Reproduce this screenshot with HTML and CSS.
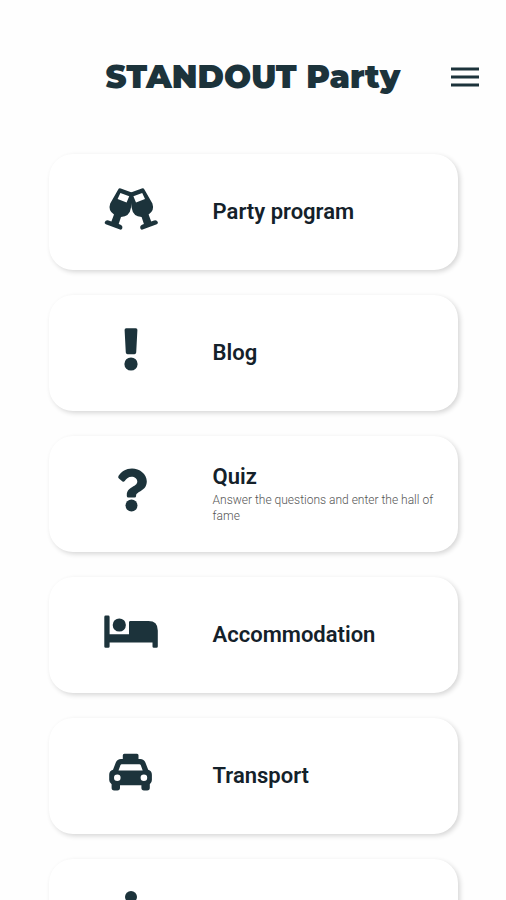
FILE: index.html
```html
<!DOCTYPE html>
<html lang="en">
<head>
<meta charset="utf-8">
<meta name="viewport" content="width=device-width, initial-scale=1">
<title>STANDOUT Party</title>
<link rel="stylesheet" href="styles.css">
</head>
<body>
<header class="header">
  <h1 class="title">STANDOUT Party</h1>
  <button class="menu" type="button" aria-label="Menu">
    <svg class="menu-icon" viewBox="0 0 28 20" aria-hidden="true"><path d="M0 2h28M0 10h28M0 18h28"/></svg>
  </button>
</header>
<main class="cards">
  <a class="card" href="#program">
    <svg class="icon" viewBox="0 0 60 50" aria-hidden="true">
      <g id="glass"><path fill-rule="evenodd" d="M17.2 2.4Q18 .8 19.8 1.4L30.8 5.6 31.4 9.6 30 20.5Q28.6 29.8 20 30L17.7 37 19.6 37.8Q22 38.9 21.2 41.5Q20.7 43.1 19 42.5L4.8 37.3Q3.2 36.6 3.8 35.1Q4.9 32.5 7.6 33.5L10.4 34.5 13 27.4Q6.8 23.4 9.2 16.4ZM19.4 6 16.6 12 25.6 15.4 28.2 9.2Z"/></g>
      <use href="#glass" transform="matrix(-1 0 0 1 60.6 0)"/>
    </svg>
    <span class="text"><span class="name">Party program</span></span>
  </a>
  <a class="card" href="#blog">
    <svg class="icon" viewBox="0 0 60 50" aria-hidden="true"><path d="M25.2.3H34.8Q36.5.3 36.4 2L35.2 24.6Q35 26.2 33.4 26.2H26.6Q25 26.2 24.8 24.6L23.6 2Q23.5.3 25.2.3Z"/><circle cx="30" cy="36" r="6.6"/></svg>
    <span class="text"><span class="name">Blog</span></span>
  </a>
  <a class="card" href="#quiz">
    <svg class="icon" viewBox="0 0 60 50" aria-hidden="true"><path d="M17.6 6.8C20.8 2.2 24.8-.6 31-.6C38.5-.6 45.8 4.8 45.8 12.3C45.8 22.4 35.1 22.3 35.1 26.6V27Q35.1 28.6 33.5 28.6H27.4Q25.8 28.6 25.8 27V26C25.8 17.4 36.3 18.2 36.3 12.5C36.3 9.5 33.4 7.8 30.7 7.8C27.3 7.8 25.8 9.4 23.7 12.1Q22.7 13.3 21.5 12.4L17.9 9.6Q16.5 8.4 17.6 6.8Z"/><circle cx="30.5" cy="36.6" r="6"/></svg>
    <span class="text"><span class="name">Quiz</span><span class="note">Answer the questions and enter the hall of fame</span></span>
  </a>
  <a class="card" href="#accommodation">
    <svg class="icon" viewBox="0 0 60 50" aria-hidden="true"><path d="M4.7 5.6H7.2Q8.6 5.6 8.6 7V24.3H28V12.4Q28 11 29.4 11H47.4Q56.8 11 56.8 20.4V36.4Q56.8 37.8 55.4 37.8H52.9Q51.5 37.8 51.5 36.4V32.5H8.6V36.4Q8.6 37.8 7.2 37.8H4.7Q3.3 37.8 3.3 36.4V7Q3.3 5.6 4.7 5.6Z"/><circle cx="18.3" cy="15" r="6.6"/></svg>
    <span class="text"><span class="name">Accommodation</span></span>
  </a>
  <a class="card" href="#transport">
    <svg class="icon" viewBox="0 0 60 50" aria-hidden="true"><path fill-rule="evenodd" d="M23.3 2.8H36Q37.5 2.8 37.5 4.3V8H39.2Q43 8 44.4 11.6L47.2 18.8Q50.9 20 50.9 23.7V29Q50.9 31.8 48.8 33.2V36.8Q48.8 39.4 46.2 39.4H43Q40.4 39.4 40.4 36.8V34.3H19V36.8Q19 39.4 16.4 39.4H13.2Q10.6 39.4 10.6 36.8V33.2Q8.2 31.8 8.2 29V23.7Q8.2 20 12 18.8L14.8 11.6Q16.2 8 20 8H21.8V4.3Q21.8 2.8 23.3 2.8ZM20.8 13.2Q19.8 13.2 19.4 14.2L17.5 19.4H41.7L39.8 14.2Q39.4 13.2 38.4 13.2ZM16.3 23.5A3.3 3.3 0 1 0 16.3 30.1A3.3 3.3 0 1 0 16.3 23.5ZM42.9 23.5A3.3 3.3 0 1 0 42.9 30.1A3.3 3.3 0 1 0 42.9 23.5Z"/></svg>
    <span class="text"><span class="name">Transport</span></span>
  </a>
  <a class="card" href="#information" aria-label="Information">
    <svg class="icon" viewBox="0 0 60 50" aria-hidden="true"><circle cx="30" cy="5" r="6"/><path d="M23 16H35V36H38V42H22V36H25V22H23Z"/></svg>
  </a>
</main>
</body>
</html>
```
FILE: styles.css
```css
* {
  box-sizing: border-box;
}

body {
  margin: 0;
  background: #fefefe;
  color: #1c333b;
  font-family: Roboto, "Liberation Sans", sans-serif;
}

.header {
  display: grid;
  grid-template-columns: 1fr auto 1fr;
  align-items: center;
  padding: 52px 27px;
}

.title {
  grid-column: 2;
  margin: 0;
  font-family: Montserrat, Inter, sans-serif;
  font-size: 32px;
  font-weight: 900;
  line-height: 50px;
  white-space: nowrap;
}

.menu {
  justify-self: end;
  display: flex;
  padding: 0;
  border: 0;
  background: none;
  color: inherit;
  cursor: pointer;
}

.menu-icon {
  width: 28px;
  height: 20px;
  fill: none;
  stroke: #1c333b;
  stroke-width: 3;
}

.cards {
  display: grid;
  gap: 25px;
  padding: 0 48px 25px 49px;
}

.card {
  display: grid;
  grid-template-columns: 2fr 3fr;
  align-items: center;
  min-height: 116px;
  border-radius: 24px;
  background: #fff;
  box-shadow: 2px 2px 5px rgba(0, 0, 0, 0.16);
  color: inherit;
  text-decoration: none;
}

.icon {
  justify-self: center;
  width: 60px;
  height: 50px;
  overflow: visible;
  fill: #1c333b;
}

.text {
  display: grid;
  gap: 2px;
  padding-right: 16px;
}

.name {
  color: #14212a;
  font-size: 22px;
  font-weight: 600;
  line-height: 26px;
}

.note {
  color: #555;
  font-size: 12px;
  font-weight: 300;
  line-height: 16px;
}
```
